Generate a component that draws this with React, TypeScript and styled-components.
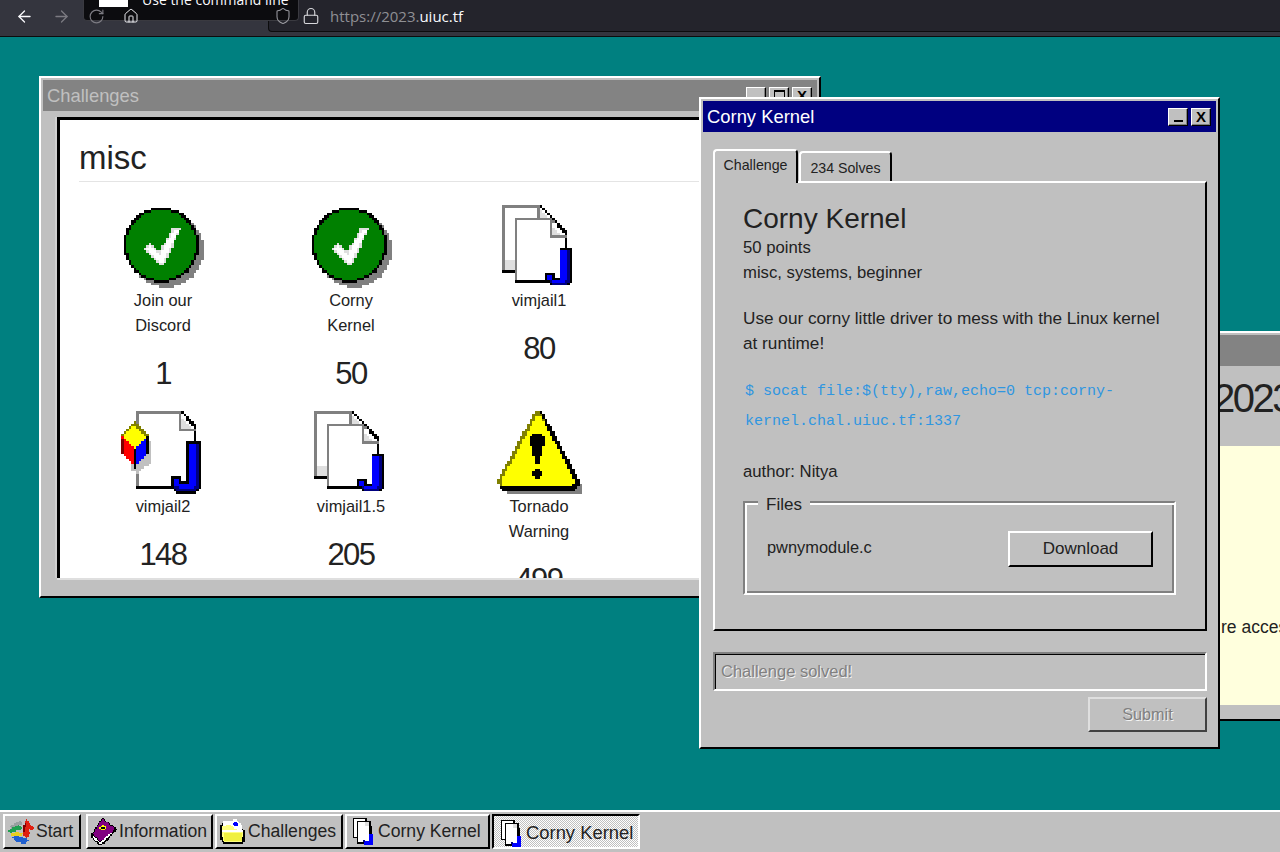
import React from "react";
import styled, { createGlobalStyle } from "styled-components";
import { ArrowLeft, ArrowRight, RotateCw, Home, Shield, Lock } from "lucide-react";

const GlobalStyle = createGlobalStyle`
  html, body { margin: 0; padding: 0; height: 100%; overflow: hidden; }
  body { font-family: "Liberation Sans", Arial, sans-serif; color: #222; }
  #root { height: 100%; }
  * { box-sizing: border-box; }
`;

// icons are rasterised on a coarse grid so they stay blocky like the old win95 ones
type Shape = { c: string; p: number[] };

const poly = (c: string, ...p: number[]): Shape => ({ c, p });
const box = (c: string, x: number, y: number, w: number, h: number): Shape =>
  poly(c, x, y, x + w, y, x + w, y + h, x, y + h);
const disc = (c: string, cx: number, cy: number, rx: number, ry = rx): Shape => {
  const p: number[] = [];
  for (let i = 0; i < 48; i++) {
    const a = (i / 48) * Math.PI * 2;
    p.push(cx + Math.cos(a) * rx, cy + Math.sin(a) * ry);
  }
  return { c, p };
};
const nudge = (shapes: Shape[], dx: number, dy = 0): Shape[] =>
  shapes.map((s) => ({ c: s.c, p: s.p.map((n, i) => n + (i % 2 ? dy : dx)) }));

const inside = (p: number[], x: number, y: number) => {
  let hit = false;
  for (let i = 0, j = p.length - 2; i < p.length; j = i, i += 2) {
    const yi = p[i + 1];
    const yj = p[j + 1];
    if (yi > y !== yj > y && x < ((p[j] - p[i]) * (y - yi)) / (yj - yi) + p[i]) hit = !hit;
  }
  return hit;
};

const PixelSvg = styled.svg`
  display: block;
  flex: none;
`;

const PixelIcon = ({ shapes, grid, size }: { shapes: Shape[]; grid: number; size: number }) => {
  const rects: React.ReactElement[] = [];
  for (let y = 0; y < grid; y++) {
    let start = 0;
    let cur = "";
    for (let x = 0; x <= grid; x++) {
      let c = "";
      if (x < grid) {
        for (const s of shapes) if (inside(s.p, x + 0.5, y + 0.5)) c = s.c;
      }
      if (c !== cur) {
        if (cur) rects.push(<rect key={y + "-" + start} x={start} y={y} width={x - start} height={1} fill={cur} />);
        start = x;
        cur = c;
      }
    }
  }
  return (
    <PixelSvg width={size} height={size} viewBox={`0 0 ${grid} ${grid}`} shapeRendering="crispEdges">
      {rects}
    </PixelSvg>
  );
};

const jGlyph = (ox: number, oy: number, sx: number, sy: number): Shape[] => {
  const t = (...v: number[]) => v.map((n, i) => (i % 2 ? oy + n * sy : ox + n * sx));
  return [
    poly("#000", ...t(6.4, 0, 12.4, 0, 12.4, 19.4, 10.4, 21.4, 2.8, 21.4, 0, 18.4, 0, 14.4, 4.4, 14.4, 4.4, 16.4, 6.4, 16.4)),
    poly("#000080", ...t(7.4, 1, 11.6, 1, 11.6, 19, 10, 20.6, 3.4, 20.6, 1, 18, 1, 15.4, 3.4, 15.4, 3.4, 17.4, 7.4, 17.4)),
    poly("#0000ff", ...t(7.4, 1, 10.4, 1, 10.4, 18.2, 9.2, 19.4, 3.6, 19.4, 1.2, 17.4, 1.2, 15.4, 3.4, 15.4, 3.4, 17.4, 7.4, 17.4)),
  ];
};

const checkIcon: Shape[] = nudge([
  disc("#808080", 18, 17, 15),
  disc("#000", 16, 15, 15),
  disc("#008000", 16, 15, 14),
  poly("#dfdfdf", 9, 16.6, 11.8, 14.4, 15.4, 17.6, 20.4, 8.4, 23.8, 8.4, 17.4, 22.8, 15.4, 22.8),
  poly("#fff", 10, 16.6, 11.8, 15.4, 15.6, 19, 21, 9, 23, 9, 16.8, 21.8, 15.6, 21.8),
], 0, 0.8);

const singleDoc: Shape[] = [
  box("#808080", 7, 0, 18, 31),
  box("#fff", 8, 1, 16, 29),
  poly("#fff", 24, 1, 30, 7, 30, 30, 8, 30, 8, 1),
  box("#000", 7, 30, 24, 1),
  poly("#000", 24, 0, 25.5, 0, 31, 6, 31, 8, 30, 8, 30, 7),
  box("#000", 30, 7, 1, 8),
  poly("#dfdfdf", 24, 2, 29, 7, 24, 7),
  box("#808080", 23.4, 1, 1, 7),
  box("#808080", 23.4, 7, 7, 1),
];

const cube: Shape[] = [
  poly("#c0c0c0", 8, 10, 13, 12, 13, 20, 7, 25, 4, 23),
  poly("#808000", 6, 4, 11.6, 10, 6, 16, 0.6, 10),
  poly("#ffff00", 6, 5.4, 10.6, 10, 6, 15, 1.4, 10),
  poly("#ff0000", 0.6, 10, 6, 15, 6, 22, 0.6, 17),
  box("#800000", 0.6, 11, 1, 6),
  poly("#0000ff", 6, 15, 11.6, 10, 11.6, 17, 6, 22),
  box("#000", 5.6, 15, 1, 8),
  box("#000", 10.8, 10, 1, 7),
];

const docsBase = (sx: number): Shape[] => [
  box("#808080", 3, 0, 15, 27),
  box("#dfdfdf", 4, 1, 13, 25),
  box("#fff", 4, 1, 13, 21),
  box("#000", 3, 26, 5, 1),
  poly("#dfdfdf", 18, 1, 23, 6, 18, 6),
  poly("#000", 18, 0, 19, 0, 24, 5, 23, 5),
  box("#808080", 8, 5, 16, 26),
  box("#fff", 9, 6, 14, 24),
  poly("#fff", 23, 6, 28, 12, 28, 30, 9, 30, 9, 6),
  box("#000", 8, 30, 21, 1),
  box("#000", 28, 12, 1, 8),
  poly("#000", 23, 5, 24, 5, 29, 11, 29, 13, 28, 13, 28, 12),
  poly("#dfdfdf", 23, 8, 27, 12, 23, 12),
  box("#808080", 22, 6, 1, 6),
  box("#808080", 22, 12, 7, 1),
  ...jGlyph(20.2, 16.8, sx, 0.73),
];

const warningIcon: Shape[] = [
  poly("#808080", 18.4, 3, 33.8, 30, 33.8, 33, 4, 33),
  poly("#808000", 15, 0, 18, 0, 32, 27, 32, 31, 2, 31, 0.5, 29, 0.5, 27),
  poly("#000", 17, 0, 18, 0, 32.6, 27, 32.6, 29.6, 31, 31.8, 2, 31.8, 1, 30, 30, 29),
  poly("#ffff00", 16, 1.4, 17.4, 2, 31, 27.6, 30, 30, 2.4, 30, 1.4, 28),
  poly("#000", 12.8, 11, 14, 9, 18, 9, 19.2, 11, 17.2, 19, 16.8, 21, 15.2, 21, 14.8, 19),
  disc("#000", 16, 25, 2.1),
];

const startIcon: Shape[] = [
  poly("#9aa0a0", 2, 6, 10, 2, 12, 4, 3, 8),
  poly("#20a050", 1, 9, 9, 5, 12, 8, 3, 11),
  poly("#e8d020", 2, 12, 8, 10, 13, 12, 6, 14),
  poly("#2060d0", 3, 14, 8, 13, 17, 16, 13, 19, 8, 18),
  poly("#e02010", 13, 3, 15, 1, 16, 3, 20, 7, 19, 9, 16, 8, 17, 11, 15, 15, 12, 13, 12, 8),
  poly("#800000", 12, 5, 14, 4, 13, 10, 12, 10),
];

const bookIcon: Shape[] = [
  poly("#000", 9, 0, 20, 8, 11, 19, 7, 20, 1, 15, 1, 12),
  poly("#fff", 2, 13, 8, 18, 16, 10, 16, 12, 8, 19, 2, 15),
  poly("#800080", 9, 1, 19, 8, 9, 16, 8, 17, 2, 12),
  poly("#ffff00", 9, 5, 13, 7, 10, 9, 7, 8),
  box("#000", 8, 7, 3, 1),
];

const folderIcon: Shape[] = [
  poly("#000", 2, 4, 14, 4, 19, 9, 19, 17, 18, 19, 3, 19, 1, 15, 1, 6),
  poly("#fff", 3, 2, 8, 2, 13, 1, 17, 6, 17, 9, 3, 9),
  poly("#0000ff", 12, 2, 15, 5, 13, 6, 10, 5),
  poly("#ffff80", 2, 6, 8, 5, 12, 8, 18, 10, 17, 18, 4, 18, 2, 13),
  box("#f0f040", 4, 11, 13, 6),
  box("#fff", 2, 9, 16, 1),
];

const smallDoc: Shape[] = [
  box("#000", 3, 0, 10, 15),
  box("#fff", 4, 1, 8, 13),
  box("#000", 6, 2, 10, 17),
  box("#fff", 7, 3, 8, 15),
  box("#000", 15, 6, 2, 6),
  box("#dfdfdf", 12, 3, 3, 3),
  box("#0000ff", 15, 12, 3, 7),
  box("#0000ff", 11, 17, 7, 3),
  box("#000080", 10, 16, 2, 2),
];

const Page = styled.div`
  height: 100vh;
  display: flex;
  flex-direction: column;
  background: #008080;
`;

const BrowserBar = styled.header`
  position: relative;
  flex: none;
  height: 37px;
  background: #34353e;
  border-bottom: 1px solid #0c0c0d;
  display: flex;
  align-items: flex-start;
`;

const NavGroup = styled.nav`
  position: relative;
  z-index: 2;
  flex: none;
  width: 268px;
  height: 32px;
  padding-left: 15px;
  display: flex;
  align-items: center;
  gap: 17.5px;
`;

const NavIcon = styled.span<{ $dim?: boolean }>`
  display: flex;
  color: ${(p) => (p.$dim ? "#7c7b82" : "#fbfbfe")};
`;

const UrlField = styled.div`
  flex: 1;
  height: 32px;
  background: #24242c;
  border-radius: 0 0 0 4px;
  border: 1px solid #0c0c0d;
  border-top: none;
  border-right: none;
  display: flex;
  align-items: center;
  padding-left: 5px;
  font-family: "Open Sans", sans-serif;
  font-size: 15px;
  color: #8f8f94;
`;

const UrlIcon = styled.span`
  position: relative;
  z-index: 2;
  display: flex;
  color: #d8d8dc;
  margin-right: 10px;
`;

const UrlHost = styled.span`
  color: #fbfbfe;
`;

const CommandTip = styled.div`
  position: absolute;
  left: 83px;
  top: 0;
  width: 216px;
  height: 21px;
  z-index: 1;
  background: #0c0c0f;
  border: 1px solid #3a3a40;
  border-top: none;
  border-radius: 0 0 4px 4px;
  overflow: hidden;
  display: flex;
  align-items: flex-end;
  gap: 14px;
  padding: 0 0 13px 15px;
  font-family: "Open Sans", sans-serif;
  font-size: 14px;
  line-height: 14px;
  color: #fbfbfe;
  white-space: nowrap;
`;

const TipThumb = styled.span`
  flex: none;
  width: 29px;
  height: 20px;
  background: #fff;
`;

const Desktop = styled.main`
  position: relative;
  flex: 1;
  overflow: hidden;
  background: #008080;
`;

const Win = styled.section<{ $x: number; $y: number; $w: number; $h: number; $z: number }>`
  position: absolute;
  left: ${(p) => p.$x}px;
  top: ${(p) => p.$y}px;
  width: ${(p) => p.$w}px;
  height: ${(p) => p.$h}px;
  z-index: ${(p) => p.$z};
  background: #c0c0c0;
  border: 2px solid;
  border-color: #fff #000 #000 #fff;
  padding: 2px;
  display: flex;
  flex-direction: column;
`;

const TitleBar = styled.div<{ $active?: boolean }>`
  flex: none;
  height: 31px;
  display: flex;
  align-items: center;
  justify-content: space-between;
  padding: 0 5px 0 4px;
  background: ${(p) => (p.$active ? "#000080" : "#838383")};
  color: ${(p) => (p.$active ? "#fff" : "#c0c0c0")};
  font-size: 18.4px;
  white-space: nowrap;
`;

const TitleButtons = styled.div`
  display: flex;
  gap: 3px;
`;

const TitleButton = styled.button`
  width: 20px;
  height: 18px;
  padding: 0;
  background: #c0c0c0;
  border: 1px solid;
  border-color: #fff #000 #000 #fff;
  box-shadow: inset -1px -1px 0 #808080;
  color: #000;
  font: bold 15px/14px "Liberation Sans", sans-serif;
  display: flex;
  align-items: center;
  justify-content: center;
`;

const MinGlyph = styled.span`
  width: 9px;
  height: 2px;
  background: #000;
  margin-top: 8px;
`;

const MaxGlyph = styled.span`
  width: 11px;
  height: 11px;
  border: 1px solid #000;
  border-top-width: 2px;
`;

const Sunken = styled.div`
  flex: 1;
  min-height: 0;
  margin: 6px 0 16px 14px;
  background: #fff;
  border-style: solid;
  border-color: #000;
  border-width: 3px 0 0 3px;
  box-shadow: 0 2px 0 #dfdfdf, -2px 0 0 #cfcfcf;
  overflow: hidden;
  padding: 0 0 0 19px;
`;

const CategoryTitle = styled.h2`
  margin: 16px 0 0;
  height: 46px;
  font-size: 33px;
  line-height: 44px;
  font-weight: 400;
  border-bottom: 1px solid #e4e4e4;
`;

const ChallengeGrid = styled.div`
  display: grid;
  grid-template-columns: repeat(3, 188px);
  grid-auto-rows: 206px;
  margin: 23px 0 0 -10px;
`;

const ChallengeCell = styled.div`
  display: flex;
  flex-direction: column;
  align-items: center;
  text-align: center;
`;

const ChallengeName = styled.div`
  width: 90px;
  margin-top: -2px;
  font-size: 16.4px;
  line-height: 25px;
`;

const ChallengePoints = styled.div`
  margin-top: 18px;
  font-size: 31px;
  line-height: 36px;
  letter-spacing: -1.5px;
`;

const TabRow = styled.div`
  flex: none;
  display: flex;
  align-items: flex-end;
  gap: 1px;
  margin: 16px 9px 0 10px;
  height: 33px;
`;

const Tab = styled.div<{ $active?: boolean }>`
  position: relative;
  z-index: ${(p) => (p.$active ? 1 : 0)};
  width: ${(p) => (p.$active ? 85 : 93)}px;
  height: ${(p) => (p.$active ? 34 : 30)}px;
  margin-bottom: ${(p) => (p.$active ? -2 : 0)}px;
  background: #c0c0c0;
  border: 2px solid;
  border-color: #fff #000 transparent #fff;
  border-bottom: none;
  border-radius: 4px 4px 0 0;
  font-size: 14.2px;
  line-height: ${(p) => (p.$active ? 29 : 31)}px;
  text-align: center;
  white-space: nowrap;
`;

const TabPanel = styled.div`
  flex: none;
  height: 450px;
  margin: 0 9px 0 10px;
  border: 2px solid;
  border-color: #fff #000 #000 #fff;
  padding: 19px 28px 0;
`;

const ChalTitle = styled.h1`
  margin: 0;
  font-size: 28px;
  line-height: 33px;
  font-weight: 400;
`;

const ChalMeta = styled.div`
  font-size: 16.7px;
  line-height: 25px;
`;

const ChalText = styled.p`
  margin: 21px 0 0;
  font-size: 17.2px;
  line-height: 25px;
`;

const ChalCode = styled.code`
  display: block;
  margin: 21px 0 0 2px;
  font-family: "Liberation Mono", monospace;
  font-size: 15px;
  line-height: 30px;
  color: #2f96e0;
`;

const Author = styled(ChalMeta)`
  margin-top: 22px;
`;

const FilesBox = styled.fieldset`
  width: 433px;
  height: 106px;
  margin: 5px 0 0;
  padding: 0 21px 0 22px;
  border: 2px solid;
  border-color: #808080 #fff #fff #808080;
  box-shadow: inset 2px 2px 0 #fff, inset -2px -2px 0 #808080;
  display: flex;
  flex-direction: row;
`;

const FilesLegend = styled.legend`
  margin-left: -9px;
  padding: 6px 8px 0;
  font-size: 17px;
  line-height: 20px;
  background: #c0c0c0;
`;

const FileRow = styled.div`
  display: flex;
  align-items: center;
  justify-content: space-between;
  width: 100%;
  height: 36px;
  margin-top: 16px;
`;

const FileName = styled.span`
  font-size: 16.4px;
  margin-bottom: 4px;
`;

const Win95Button = styled.button<{ $w: number; $h: number }>`
  width: ${(p) => p.$w}px;
  height: ${(p) => p.$h}px;
  background: #c0c0c0;
  border: 2px solid;
  border-color: #fff #000 #000 #fff;
  font: 17px "Liberation Sans", sans-serif;
  color: #222;
  padding: 0;
`;

const DisabledButton = styled(Win95Button)`
  border-color: #dfdfdf #404040 #404040 #dfdfdf;
  color: #808080;
  font-size: 16.2px;
  text-shadow: 1px 1px 0 #f4f4f4;
`;

const SolvedInput = styled.div`
  flex: none;
  height: 39px;
  margin: 21px 9px 0 10px;
  border: 2px solid;
  border-color: #808080 #fff #fff #808080;
  box-shadow: inset 1px 1px 0 #000, inset 0 1px 0 #000;
  padding-left: 6px;
  font-size: 16.5px;
  line-height: 35px;
  color: #808080;
  text-shadow: 1px 1px 0 #f4f4f4;
`;

const SubmitRow = styled.div`
  display: flex;
  justify-content: flex-end;
  margin: 6px 9px 0 0;
`;

const BackBody = styled.div`
  flex: 1;
  min-height: 0;
  display: flex;
  flex-direction: column;
`;

const BackHeading = styled.div`
  flex: none;
  height: 80px;
  padding: 9px 0 0 19px;
  font-size: 40px;
  line-height: 46px;
  letter-spacing: -2.5px;
`;

const BackNote = styled.div`
  flex: 1;
  margin-bottom: 12px;
  background: #ffffdd;
  padding: 170px 0 0 27px;
  font-size: 17.5px;
  line-height: 22px;
  white-space: nowrap;
`;

const Taskbar = styled.footer`
  flex: none;
  height: 42px;
  background: #c0c0c0;
  border-top: 2px solid #fff;
  display: flex;
  align-items: flex-start;
  padding: 2px 0 0 3px;
  gap: 2px;
`;

const TaskButton = styled.div<{ $w: number; $pressed?: boolean; $gap?: number }>`
  width: ${(p) => p.$w}px;
  height: 35px;
  flex: none;
  margin-left: ${(p) => p.$gap ?? 0}px;
  border: 2px solid;
  border-color: ${(p) => (p.$pressed ? "#000 #fff #fff #000" : "#fff #000 #000 #fff")};
  background: ${(p) =>
    p.$pressed ? "repeating-conic-gradient(#fff 0 25%, #c0c0c0 0 50%) 0 0 / 2px 2px" : "#c0c0c0"};
  display: flex;
  align-items: center;
  gap: 2px;
  padding: ${(p) => (p.$pressed ? "3px 0 0 3px" : "0 0 0 2px")};
  font-size: ${(p) => (p.$pressed ? 18.4 : 17.6)}px;
  white-space: nowrap;
  color: #222;
`;

const challenges = [
  { name: "Join our Discord", points: 1, shapes: checkIcon },
  { name: "Corny Kernel", points: 50, shapes: checkIcon },
  { name: "vimjail1", points: 80, shapes: nudge(docsBase(0.84), -1) },
  { name: "vimjail2", points: 148, shapes: nudge([...singleDoc, ...jGlyph(20.2, 11.6, 1, 1), ...cube], -0.6) },
  { name: "vimjail1.5", points: 205, shapes: nudge(docsBase(0.84), -1) },
  { name: "Tornado Warning", points: 499, shapes: warningIcon },
];

export default function App() {
  return (
    <Page>
      <GlobalStyle />
      <BrowserBar>
        <NavGroup>
          <NavIcon><ArrowLeft size={19} strokeWidth={1.6} /></NavIcon>
          <NavIcon $dim><ArrowRight size={19} strokeWidth={1.6} /></NavIcon>
          <NavIcon $dim><RotateCw size={17} strokeWidth={1.6} /></NavIcon>
          <NavIcon><Home size={16} strokeWidth={1.4} /></NavIcon>
        </NavGroup>
        <UrlField>
          <UrlIcon><Shield size={18} strokeWidth={1.4} color="#9a9aa0" /></UrlIcon>
          <UrlIcon><Lock size={18} strokeWidth={1.5} /></UrlIcon>
          <span>https://2023.<UrlHost>uiuc.tf</UrlHost></span>
        </UrlField>
        <CommandTip>
          <TipThumb />
          Use the command line
        </CommandTip>
      </BrowserBar>

      <Desktop>
        <Win $x={39} $y={39} $w={782} $h={522} $z={1}>
          <TitleBar>
            Challenges
            <TitleButtons>
              <TitleButton><MinGlyph /></TitleButton>
              <TitleButton><MaxGlyph /></TitleButton>
              <TitleButton>X</TitleButton>
            </TitleButtons>
          </TitleBar>
          <Sunken>
            <CategoryTitle>misc</CategoryTitle>
            <ChallengeGrid>
              {challenges.map((c) => (
                <ChallengeCell key={c.name}>
                  <PixelIcon shapes={c.shapes} grid={34} size={85} />
                  <ChallengeName>{c.name}</ChallengeName>
                  <ChallengePoints>{c.points}</ChallengePoints>
                </ChallengeCell>
              ))}
            </ChallengeGrid>
          </Sunken>
        </Win>

        <Win $x={1190} $y={294} $w={200} $h={390} $z={2}>
          <TitleBar />
          <BackBody>
            <BackHeading>2023</BackHeading>
            <BackNote>re accessible</BackNote>
          </BackBody>
        </Win>

        <Win $x={699} $y={60} $w={521} $h={652} $z={3}>
          <TitleBar $active>
            Corny Kernel
            <TitleButtons>
              <TitleButton><MinGlyph /></TitleButton>
              <TitleButton>X</TitleButton>
            </TitleButtons>
          </TitleBar>
          <TabRow>
            <Tab $active>Challenge</Tab>
            <Tab>234 Solves</Tab>
          </TabRow>
          <TabPanel>
            <ChalTitle>Corny Kernel</ChalTitle>
            <ChalMeta>50 points</ChalMeta>
            <ChalMeta>misc, systems, beginner</ChalMeta>
            <ChalText>
              Use our corny little driver to mess with the Linux kernel
              <br />
              at runtime!
            </ChalText>
            <ChalCode>
              $ socat file:$(tty),raw,echo=0 tcp:corny-
              <br />
              kernel.chal.uiuc.tf:1337
            </ChalCode>
            <Author>author: Nitya</Author>
            <FilesBox>
              <FilesLegend>Files</FilesLegend>
              <FileRow>
                <FileName>pwnymodule.c</FileName>
                <Win95Button $w={145} $h={36}>Download</Win95Button>
              </FileRow>
            </FilesBox>
          </TabPanel>
          <SolvedInput>Challenge solved!</SolvedInput>
          <SubmitRow>
            <DisabledButton $w={119} $h={35}>Submit</DisabledButton>
          </SubmitRow>
        </Win>
      </Desktop>

      <Taskbar>
        <TaskButton $w={78}>
          <PixelIcon shapes={startIcon} grid={20} size={27} />
          Start
        </TaskButton>
        <TaskButton $w={127} $gap={3}>
          <PixelIcon shapes={bookIcon} grid={20} size={27} />
          Information
        </TaskButton>
        <TaskButton $w={128}>
          <PixelIcon shapes={folderIcon} grid={20} size={27} />
          Challenges
        </TaskButton>
        <TaskButton $w={145}>
          <PixelIcon shapes={smallDoc} grid={20} size={27} />
          Corny Kernel
        </TaskButton>
        <TaskButton $w={148} $pressed>
          <PixelIcon shapes={smallDoc} grid={20} size={27} />
          Corny Kernel
        </TaskButton>
      </Taskbar>
    </Page>
  );
}
